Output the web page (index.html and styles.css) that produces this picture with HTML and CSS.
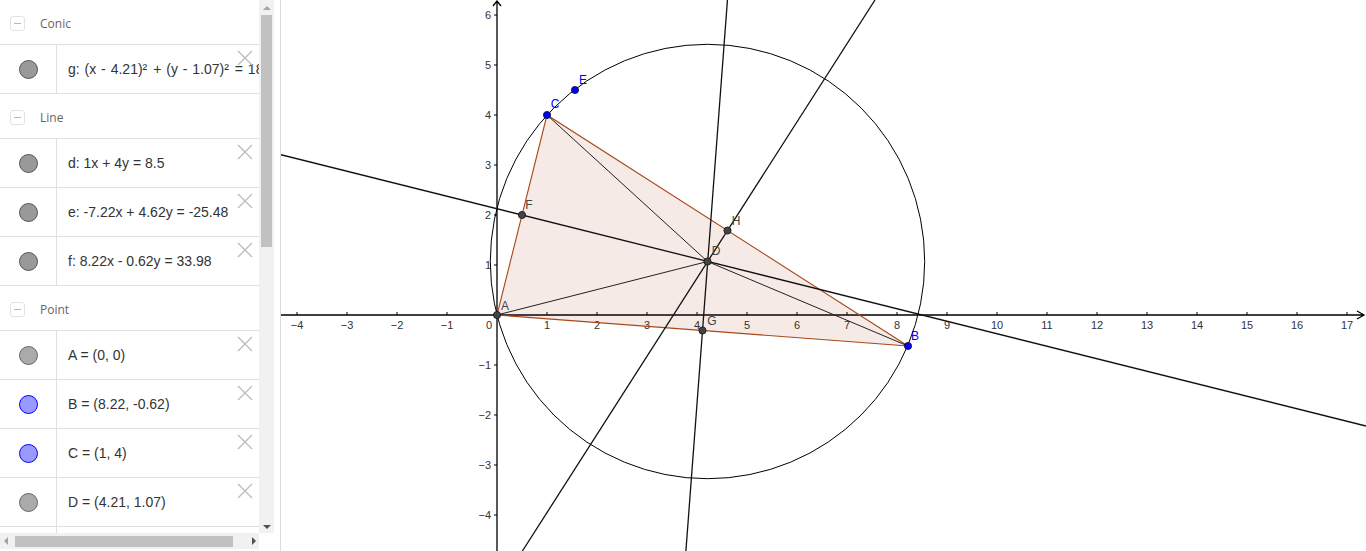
FILE: index.html
```html
<!DOCTYPE html>
<html>
<head>
<meta charset="utf-8">
<link rel="stylesheet" href="styles.css">
</head>
<body>
<div class="app">
  <aside class="av">
    <div class="av-top">
      <div class="list">
        <div class="group"><span class="toggle"><span class="minus"></span></span><span class="gname">Conic</span></div>
        <div class="row"><div class="mcell"><span class="marker m-dark"></span></div><div class="expr wide">g: (x - 4.21)<span class="sq">²</span> + (y - 1.07)<span class="sq">²</span> = 18.87</div><svg class="del" viewBox="0 0 16 16"><path d="M1 1L15 15M15 1L1 15"/></svg></div>
        <div class="group"><span class="toggle"><span class="minus"></span></span><span class="gname">Line</span></div>
        <div class="row"><div class="mcell"><span class="marker m-dark"></span></div><div class="expr">d: 1x + 4y = 8.5</div><svg class="del" viewBox="0 0 16 16"><path d="M1 1L15 15M15 1L1 15"/></svg></div>
        <div class="row"><div class="mcell"><span class="marker m-dark"></span></div><div class="expr">e: -7.22x + 4.62y = -25.48</div><svg class="del" viewBox="0 0 16 16"><path d="M1 1L15 15M15 1L1 15"/></svg></div>
        <div class="row"><div class="mcell"><span class="marker m-dark"></span></div><div class="expr">f: 8.22x - 0.62y = 33.98</div><svg class="del" viewBox="0 0 16 16"><path d="M1 1L15 15M15 1L1 15"/></svg></div>
        <div class="group"><span class="toggle"><span class="minus"></span></span><span class="gname">Point</span></div>
        <div class="row"><div class="mcell"><span class="marker m-light"></span></div><div class="expr">A = (0, 0)</div><svg class="del" viewBox="0 0 16 16"><path d="M1 1L15 15M15 1L1 15"/></svg></div>
        <div class="row"><div class="mcell"><span class="marker m-blue"></span></div><div class="expr">B = (8.22, -0.62)</div><svg class="del" viewBox="0 0 16 16"><path d="M1 1L15 15M15 1L1 15"/></svg></div>
        <div class="row"><div class="mcell"><span class="marker m-blue"></span></div><div class="expr">C = (1, 4)</div><svg class="del" viewBox="0 0 16 16"><path d="M1 1L15 15M15 1L1 15"/></svg></div>
        <div class="row"><div class="mcell"><span class="marker m-light"></span></div><div class="expr">D = (4.21, 1.07)</div><svg class="del" viewBox="0 0 16 16"><path d="M1 1L15 15M15 1L1 15"/></svg></div>
        <div class="row"><div class="mcell"><span class="marker m-blue"></span></div><div class="expr">E = (1.56, 4.5)</div><svg class="del" viewBox="0 0 16 16"><path d="M1 1L15 15M15 1L1 15"/></svg></div>
      </div>
      <div class="vbar">
        <div class="sbtn"><span class="arr-up"></span></div>
        <div class="vthumb"></div>
        <div class="sfill"></div>
        <div class="sbtn"><span class="arr-down"></span></div>
      </div>
    </div>
    <div class="hbar">
      <div class="sbtn"><span class="arr-left"></span></div>
      <div class="hthumb"></div>
      <div class="sfill"></div>
      <div class="sbtn"><span class="arr-right"></span></div>
    </div>
  </aside>
  <main class="gv">
    <svg class="canvas" width="1085" height="551" viewBox="281 0 1085 551">
      <g class="axes">
        <path d="M281 315H1364 M1357 311L1364 315L1357 319"/>
        <path d="M497 551V1 M493 6L497 1L501 6"/>
        <path class="ticks" d="M297 312V315M347 312V315M397 312V315M447 312V315M547 312V315M597 312V315M647 312V315M697 312V315M747 312V315M797 312V315M847 312V315M897 312V315M947 312V315M997 312V315M1047 312V315M1097 312V315M1147 312V315M1197 312V315M1247 312V315M1297 312V315M1347 312V315M494 15H497M494 65H497M494 115H497M494 165H497M494 215H497M494 265H497M494 365H497M494 415H497M494 465H497M494 515H497"/>
      </g>
      <g class="xlab">
        <text x="297" y="329">−4</text><text x="347" y="329">−3</text><text x="397" y="329">−2</text><text x="447" y="329">−1</text>
        <text x="489" y="329">0</text>
        <text x="547" y="329">1</text><text x="597" y="329">2</text><text x="647" y="329">3</text><text x="697" y="329">4</text>
        <text x="747" y="329">5</text><text x="797" y="329">6</text><text x="847" y="329">7</text><text x="897" y="329">8</text>
        <text x="947" y="329">9</text><text x="997" y="329">10</text><text x="1047" y="329">11</text><text x="1097" y="329">12</text>
        <text x="1147" y="329">13</text><text x="1197" y="329">14</text><text x="1247" y="329">15</text><text x="1297" y="329">16</text>
        <text x="1347" y="329">17</text>
      </g>
      <g class="ylab">
        <text x="491" y="19">6</text><text x="491" y="69">5</text><text x="491" y="119">4</text>
        <text x="491" y="169">3</text><text x="491" y="219">2</text><text x="491" y="269">1</text>
        <text x="491" y="369">−1</text><text x="491" y="419">−2</text><text x="491" y="469">−3</text><text x="491" y="519">−4</text>
      </g>
      <polygon class="tri" points="497,315 908,346 547,115"/>
      <circle class="conic" cx="707.5" cy="261.5" r="217.2"/>
      <g class="lines">
        <line x1="281" y1="154.75" x2="1366" y2="426"/>
        <line x1="875" y1="0" x2="522.4" y2="551"/>
        <line x1="727.45" y1="0" x2="685.9" y2="551"/>
      </g>
      <g class="segs">
        <line x1="497" y1="315" x2="707.5" y2="261.5"/>
        <line x1="908" y1="346" x2="707.5" y2="261.5"/>
        <line x1="547" y1="115" x2="707.5" y2="261.5"/>
      </g>
      <g class="pts-dark">
        <circle cx="497" cy="315" r="3.6"/>
        <circle cx="522" cy="215" r="3.6"/>
        <circle cx="702.5" cy="330.5" r="3.6"/>
        <circle cx="727.5" cy="230.5" r="3.6"/>
        <circle cx="707.5" cy="261.5" r="3.6"/>
      </g>
      <g class="pts-blue">
        <circle cx="908" cy="346" r="3.6"/>
        <circle cx="547" cy="115" r="3.6"/>
        <circle cx="575" cy="90" r="3.6"/>
      </g>
      <g class="lab-dark">
        <text x="505" y="310">A</text>
        <text x="529" y="209">F</text>
        <text x="712" y="325">G</text>
        <text x="736" y="225">H</text>
        <text x="716" y="255">D</text>
      </g>
      <g class="lab-blue">
        <text x="915" y="340">B</text>
        <text x="555" y="108">C</text>
        <text x="583" y="84">E</text>
      </g>
    </svg>
  </main>
</div>
</body>
</html>
```
FILE: styles.css
```css
html, body {
  margin: 0;
  padding: 0;
  background: #fff;
}
.app {
  display: flex;
  width: 1366px;
  height: 551px;
  overflow: hidden;
}
.av {
  width: 280px;
  flex: none;
  border-right: 1px solid #dcdcdc;
  display: flex;
  flex-direction: column;
  background: #fff;
}
.av-top {
  display: flex;
  height: 533px;
}
.list {
  width: 259px;
  flex: none;
  overflow: hidden;
}
.group {
  height: 44px;
  border-bottom: 1px solid #e0e0e0;
  display: flex;
  align-items: center;
  padding-left: 10px;
}
.toggle {
  width: 13px;
  height: 13px;
  border: 1px solid #e2e2e2;
  border-radius: 3px;
  margin-top: 3px;
  margin-right: 15px;
  display: flex;
  align-items: center;
  justify-content: center;
}
.minus {
  width: 7px;
  height: 1px;
  background: #b8b8b8;
}
.gname {
  font-family: "Open Sans", "Liberation Sans", sans-serif;
  font-size: 12px;
  color: #666;
  margin-top: 2px;
}
.row {
  position: relative;
  height: 48px;
  border-bottom: 1px solid #e0e0e0;
  display: flex;
  width: 259px;
}
.mcell {
  width: 56px;
  flex: none;
  border-right: 1px solid #e0e0e0;
  display: flex;
  align-items: center;
  justify-content: center;
}
.marker {
  width: 17px;
  height: 17px;
  border-radius: 50%;
  margin-left: 1px;
}
.m-dark {
  background: #999;
  border: 1px solid #555;
}
.m-light {
  background: #aaa;
  border: 1px solid #666;
}
.m-blue {
  background: #9999ff;
  border: 1px solid #0000ff;
}
.expr {
  padding-left: 11px;
  display: flex;
  align-items: center;
  white-space: pre;
  font-family: "Liberation Sans", Arial, sans-serif;
  font-size: 14px;
  color: #333;
}
.wide {
  word-spacing: 1px;
}
.sq {
  margin-right: 1px;
}
.del {
  position: absolute;
  left: 237px;
  top: 5px;
  width: 16px;
  height: 16px;
  fill: none;
  stroke: #bdbdbd;
  stroke-width: 1.4;
}
.vbar {
  width: 15px;
  flex: none;
  background: #f1f1f1;
  display: flex;
  flex-direction: column;
}
.sbtn {
  width: 15px;
  height: 15px;
  flex: none;
  display: flex;
  align-items: center;
  justify-content: center;
}
.vthumb {
  height: 232px;
  margin: 0 2px;
  background: #c1c1c1;
}
.sfill {
  flex: 1;
}
.arr-up {
  width: 0;
  height: 0;
  border-left: 4px solid transparent;
  border-right: 4px solid transparent;
  border-bottom: 4px solid #a3a3a3;
}
.arr-down {
  width: 0;
  height: 0;
  border-left: 4px solid transparent;
  border-right: 4px solid transparent;
  border-top: 4px solid #505050;
  margin-top: 2px;
}
.hbar {
  width: 259px;
  height: 16px;
  background: #f1f1f1;
  display: flex;
  align-items: flex-start;
}
.hbar .sbtn {
  height: 16px;
}
.hthumb {
  width: 218px;
  height: 11px;
  margin-top: 3px;
  background: #c1c1c1;
}
.arr-left {
  width: 0;
  height: 0;
  border-top: 4px solid transparent;
  border-bottom: 4px solid transparent;
  border-right: 4px solid #a3a3a3;
  margin-left: -4px;
}
.arr-right {
  width: 0;
  height: 0;
  border-top: 4px solid transparent;
  border-bottom: 4px solid transparent;
  border-left: 4px solid #505050;
  margin-left: 4px;
}
.gv {
  flex: 1;
  overflow: hidden;
  background: #fff;
}
.canvas {
  display: block;
}
.axes path {
  fill: none;
  stroke: #000;
  stroke-width: 1.3;
}
.axes .ticks {
  stroke-width: 1;
}
.xlab text, .ylab text {
  font-family: "Liberation Sans", Arial, sans-serif;
  font-size: 11px;
  fill: #333;
}
.xlab text {
  text-anchor: middle;
}
.ylab text {
  text-anchor: end;
}
.tri {
  fill: #993300;
  fill-opacity: 0.1;
  stroke: #a8481a;
  stroke-width: 1.1;
}
.conic {
  fill: none;
  stroke: #000;
  stroke-width: 1;
}
.lines line {
  stroke: #111;
  stroke-width: 1.3;
}
.segs line {
  stroke: #222;
  stroke-width: 1;
}
.pts-dark circle {
  fill: #444;
  stroke: #111;
  stroke-width: 0.8;
}
.pts-blue circle {
  fill: #0000ff;
  stroke: #111;
  stroke-width: 0.8;
}
.lab-dark text, .lab-blue text {
  font-family: "Liberation Sans", Arial, sans-serif;
  font-size: 12px;
  text-anchor: middle;
}
.lab-dark text {
  fill: #444;
}
.lab-blue text {
  fill: #0000ff;
}
```
